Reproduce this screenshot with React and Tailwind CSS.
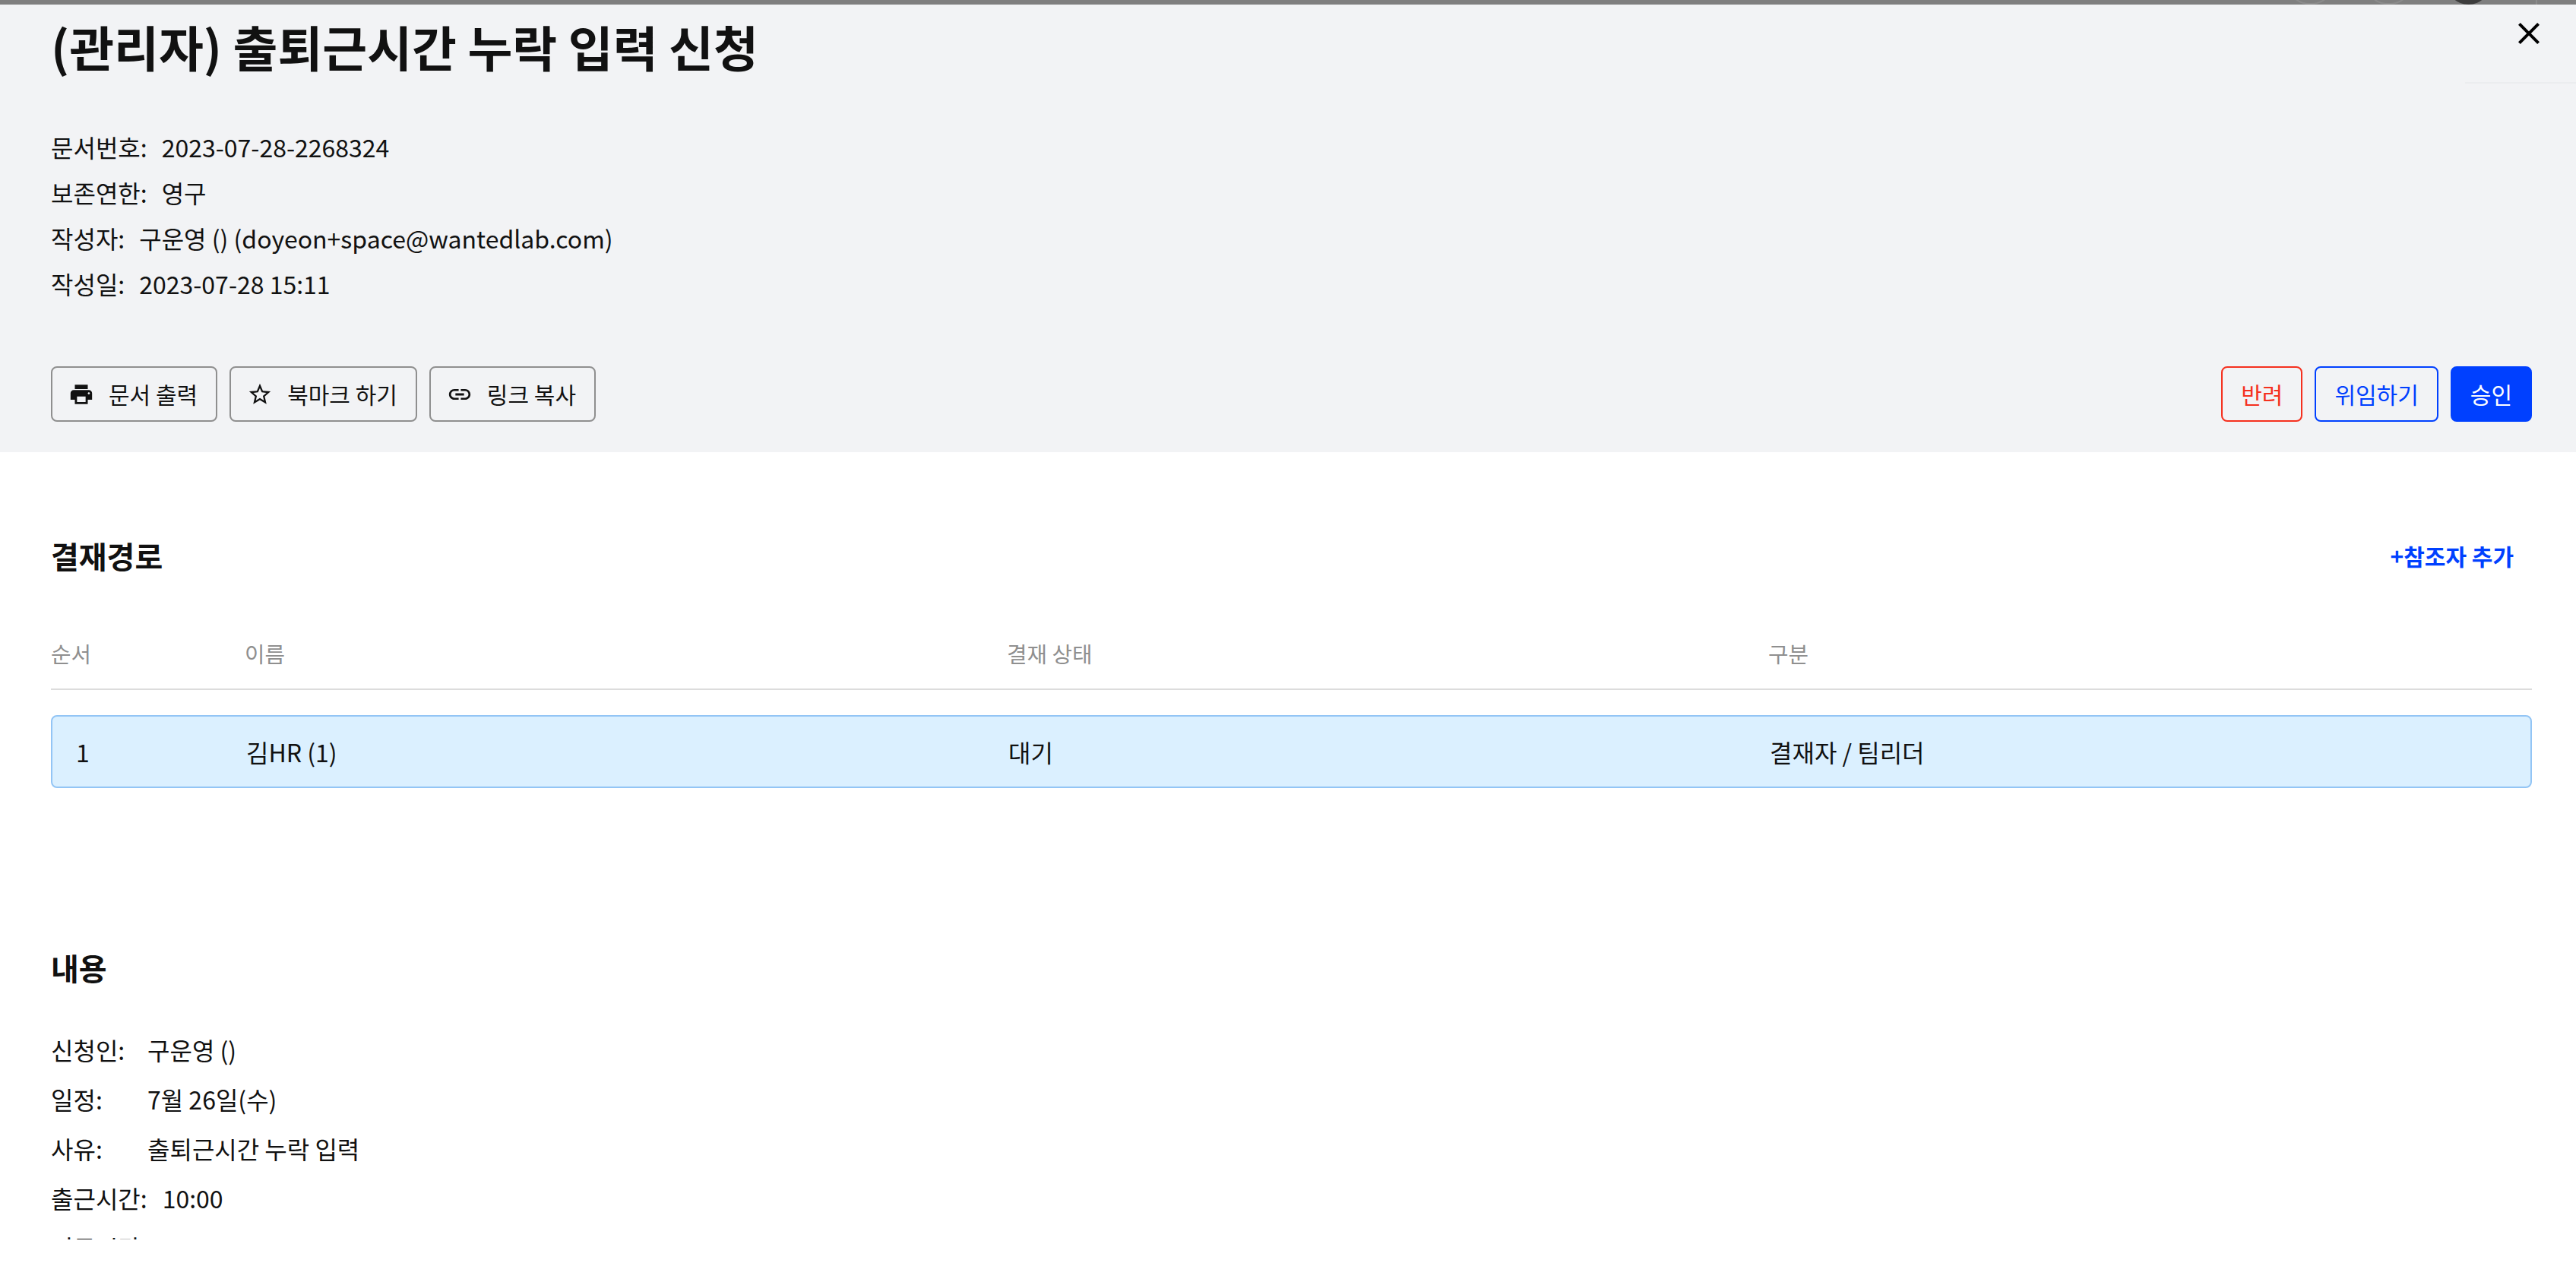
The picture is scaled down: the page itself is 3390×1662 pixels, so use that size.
import React from 'react';
import { MdPrint, MdStarBorder, MdLink, MdClose } from 'react-icons/md';

const docInfo = [
  ['문서번호:', '2023-07-28-2268324'],
  ['보존연한:', '영구'],
  ['작성자:', '구운영 () (doyeon+space@wantedlab.com)'],
  ['작성일:', '2023-07-28 15:11'],
];

const contentRows = [
  ['신청인:', '구운영 ()'],
  ['일정:', '7월 26일(수)'],
  ['사유:', '출퇴근시간 누락 입력'],
  ['출근시간:', '10:00'],
  ['퇴근시간:', '19:00'],
];

const docButtons = [
  { label: '문서 출력', Icon: MdPrint },
  { label: '북마크 하기', Icon: MdStarBorder },
  { label: '링크 복사', Icon: MdLink },
];

const App = () => {
  return (
    <div className="relative h-screen overflow-hidden bg-white text-[32px] text-[#111111] font-['Noto_Sans_CJK_KR','Noto_Sans',sans-serif]">
      {/* dimmed page behind the modal */}
      <div className="relative h-[6px] overflow-hidden bg-[#7f7f7f]">
        <div className="absolute left-[3009px] top-[-54px] h-[60px] w-[63px] rounded-full border-2 border-[#8c8c8c]" />
        <div className="absolute left-[3112px] top-[-54px] h-[60px] w-[63px] rounded-full border-2 border-[#8c8c8c]" />
        <div className="absolute left-[3219px] top-[-54px] h-[60px] w-[59px] rounded-full bg-[#3d3d3d]" />
        <div className="absolute left-[3337px] top-0 h-full w-[2px] bg-[#8c8c8c]" />
      </div>

      <button className="absolute left-[3304px] top-[20px] z-10 flex h-12 w-12 items-center justify-center text-black">
        <MdClose size={48} />
      </button>
      <div className="absolute right-0 top-[108px] h-[2px] w-[146px] bg-[#ebedef]" />

      <div className="h-[1625px] overflow-hidden">
        <header className="bg-[#f2f3f5] pb-[40px] pl-[67px] pr-[58px] pt-[14px]">
          <h1 className="text-[64px] font-bold leading-[80px]">(관리자) 출퇴근시간 누락 입력 신청</h1>

          <div className="mt-[63px]">
            {docInfo.map(([label, value]) => (
              <div key={label} className="flex h-[60px] items-center gap-[19px]">
                <span>{label}</span>
                <span>{value}</span>
              </div>
            ))}
          </div>

          <div className="mt-[79px] flex justify-between">
            <div className="flex gap-4">
              {docButtons.map(({ label, Icon }) => (
                <button
                  key={label}
                  className="flex h-[73px] items-center gap-[19px] rounded-lg border-2 border-[#8f8f8f] pl-[21px] pr-[24px] text-[30px]"
                >
                  <Icon size={34} />
                  {label}
                </button>
              ))}
            </div>
            <div className="flex gap-4">
              <button className="h-[73px] rounded-lg border-2 border-[#f5301e] px-[24px] text-[30px] text-[#f5301e]">반려</button>
              <button className="h-[73px] rounded-lg border-2 border-[#0040ff] px-[24px] text-[30px] text-[#0040ff]">위임하기</button>
              <button className="h-[73px] rounded-lg border-2 border-[#0040ff] bg-[#0040ff] px-[24px] text-[30px] text-white">승인</button>
            </div>
          </div>
        </header>

        <section className="pl-[67px] pr-[58px] pt-[104px]">
          <div className="flex h-[64px] items-center justify-between pr-[24px]">
            <h2 className="text-[40px] font-bold">결재경로</h2>
            <button className="text-[30px] font-bold text-[#0040ff]">+참조자 추가</button>
          </div>

          <div className="mt-[51px] grid h-[94px] grid-cols-[255px_1003px_1002px_1fr] items-center border-b-2 border-[#dcdcdc] text-[28.8px] text-[#8f8f8f]">
            <span>순서</span>
            <span>이름</span>
            <span>결재 상태</span>
            <span>구분</span>
          </div>

          <div className="mt-[33px] grid h-[96px] grid-cols-[255px_1003px_1002px_1fr] items-center rounded-lg border-2 border-[#93c5f5] bg-[#dbf0ff]">
            <span className="pl-[31px]">1</span>
            <span>김HR (1)</span>
            <span>대기</span>
            <span>결재자 / 팀리더</span>
          </div>
        </section>

        <section className="px-[67px] pt-[204px]">
          <h2 className="text-[40px] font-bold leading-[64px]">내용</h2>
          <div className="mt-[43px]">
            {contentRows.map(([label, value]) => (
              <div key={label} className="flex h-[65px] items-center gap-5">
                <span className="min-w-[107px]">{label}</span>
                <span>{value}</span>
              </div>
            ))}
          </div>
        </section>
      </div>
    </div>
  );
};

export default App;
